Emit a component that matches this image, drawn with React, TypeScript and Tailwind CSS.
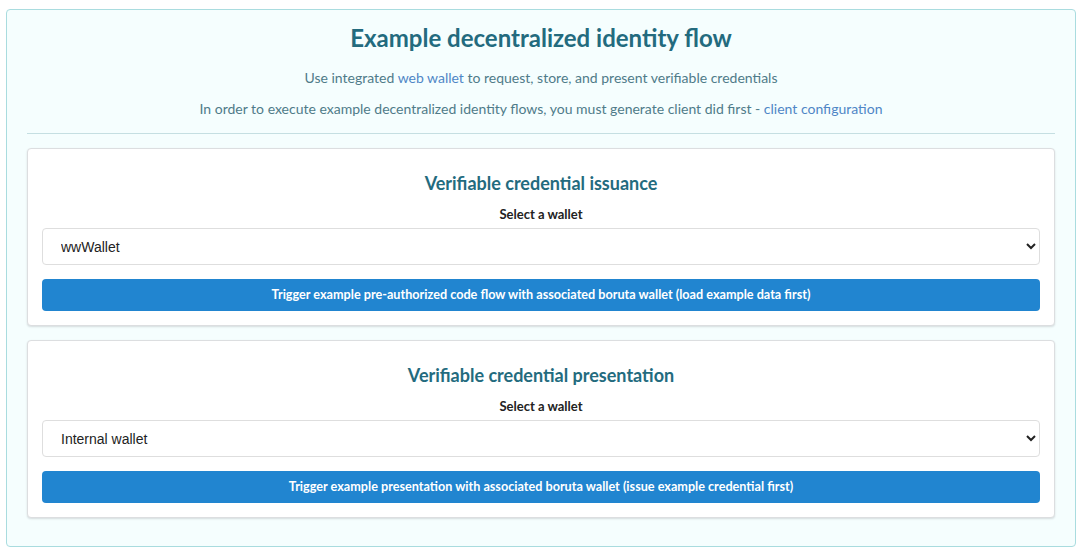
import { useState } from 'react';

const wallets = ['wwWallet', 'Internal wallet'];

interface FlowCardProps {
  title: string;
  defaultWallet: string;
  action: string;
}

function FlowCard({ title, defaultWallet, action }: FlowCardProps) {
  const [wallet, setWallet] = useState(defaultWallet);

  return (
    <div className="bg-white border border-[#dcdee0] rounded-[4px] shadow-[0_1px_2px_rgba(34,36,38,0.15)] px-[14px] pt-[22px] pb-[14px]">
      <h3 className="text-center text-[18px] font-bold text-[#236b7e] leading-[24px]">{title}</h3>
      <label className="block text-center text-[13px] font-bold text-[#222] mt-[10px] mb-[5px] leading-[18px]">
        Select a wallet
      </label>
      <select
        value={wallet}
        onChange={(e) => setWallet(e.target.value)}
        className="w-full h-[37px] bg-white border border-[#dedede] rounded-[4px] pl-[14px] pr-[8px] text-[14px] text-[#222] font-['Liberation_Sans',Arial,sans-serif]"
      >
        {wallets.map((w) => (
          <option key={w} value={w}>
            {w}
          </option>
        ))}
      </select>
      <button className="w-full h-[32px] mt-[14px] bg-[#2185d0] hover:bg-[#1678c2] text-white text-[12.65px] font-bold rounded-[4px]">
        {action}
      </button>
    </div>
  );
}

export default function App() {
  return (
    <div className="min-h-screen bg-white font-['Lato','Noto_Sans',sans-serif] pt-[9px] pl-[6px] pr-[7px]">
      <div className="bg-[#f5fefe] border border-[#a9dcdf] rounded-[4px] px-[20px] pt-[12px] pb-[28px]">
        <h1 className="text-center text-[24px] font-bold text-[#236b7e] leading-[32px]">
          Example decentralized identity flow
        </h1>
        <p className="text-center text-[14px] text-[#4f7b89] mt-[14px] leading-[20px]">
          Use integrated{' '}
          <a href="#" className="text-[#4f86c6]">
            web wallet
          </a>{' '}
          to request, store, and present verifiable credentials
        </p>
        <p className="text-center text-[14px] text-[#4f7b89] mt-[11px] leading-[20px]">
          In order to execute example decentralized identity flows, you must generate client did first -{' '}
          <a href="#" className="text-[#4f86c6]">
            client configuration
          </a>
        </p>
        <hr className="border-t border-[#c5dfe2] mt-[14px] mb-[14px]" />
        <div className="flex flex-col gap-[14px]">
          <FlowCard
            title="Verifiable credential issuance"
            defaultWallet="wwWallet"
            action="Trigger example pre-authorized code flow with associated boruta wallet (load example data first)"
          />
          <FlowCard
            title="Verifiable credential presentation"
            defaultWallet="Internal wallet"
            action="Trigger example presentation with associated boruta wallet (issue example credential first)"
          />
        </div>
      </div>
    </div>
  );
}
